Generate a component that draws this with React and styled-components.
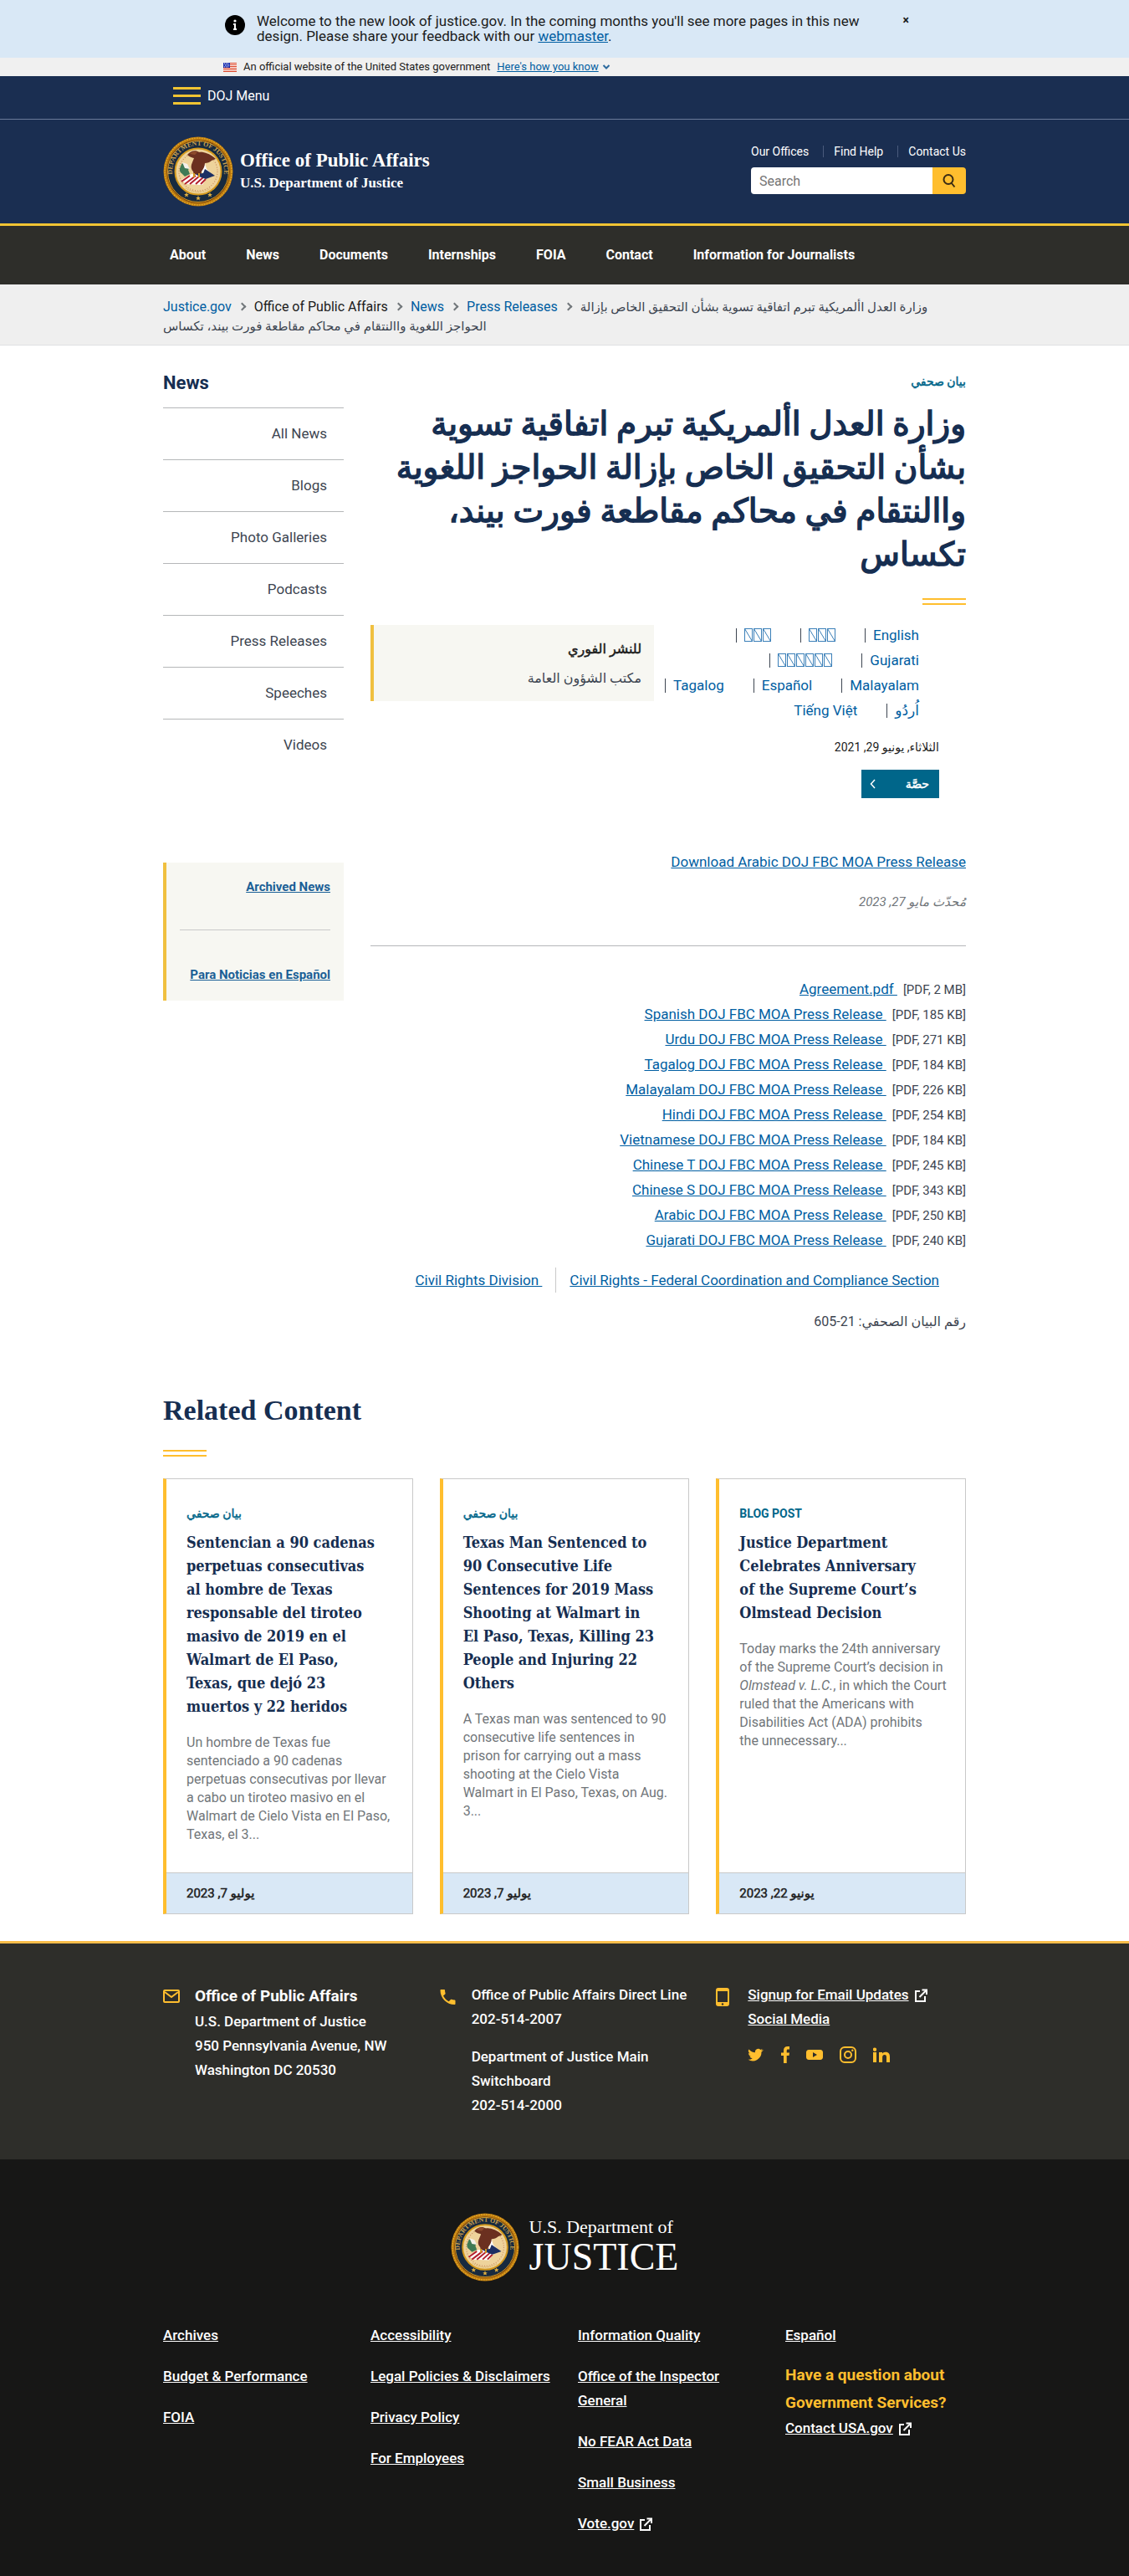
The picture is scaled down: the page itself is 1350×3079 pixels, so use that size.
import React from 'react';
import styled, { createGlobalStyle, css } from 'styled-components';

const sans = `"Roboto", "DejaVu Sans", sans-serif`;
const serif = `"Liberation Serif", "DejaVu Serif", serif`;
const cardSerif = `"DejaVu Serif Condensed", "Liberation Serif", serif`;
const gold = '#ffbe2e';
const navy = '#162e51';
const blue = '#005ea2';

/* Arabic emphasis: the regular face thickened by a stroke, so that its widths stay narrow. */
const arabicStrong = css`
  font-weight: 400;
  -webkit-text-stroke: ${(p) => p.$stroke || '0.5px'} currentColor;
`;

const GlobalStyle = createGlobalStyle`
  *, *::before, *::after { box-sizing: border-box; }
  body { margin: 0; background: #fff; color: #1b1b1b; font-family: ${sans}; font-size: 16px; line-height: 24px; }
  h1, h2, h3, p, ul, ol { margin: 0; padding: 0; }
  ul, ol { list-style: none; }
  a { color: ${blue}; }
  button, input { font-family: inherit; }
`;

const Container = styled.div`
  max-width: 992px;
  margin: 0 auto;
  padding: 0 16px;
`;

/* ---------- Site alert and government banner ---------- */
const Alert = styled.section`
  background: #d9e8f6;
`;
const AlertInner = styled.div`
  display: flex;
  align-items: flex-start;
  max-width: 824px;
  margin: 0 auto;
  padding: 16px 0 17px 5px;
`;
const AlertText = styled.p`
  width: 744px;
  padding-right: 16px;
  margin-left: 13px;
  font-size: 17px;
  line-height: 18px;
`;
const CloseButton = styled.button`
  margin-left: auto;
  padding: 0;
  border: 0;
  background: none;
  font-size: 14px;
  line-height: 16px;
  font-weight: 700;
  color: #1b1b1b;
`;
const GovBanner = styled.section`
  background: #f0f0f0;
`;
const GovInner = styled.div`
  display: flex;
  align-items: center;
  gap: 8px;
  max-width: 816px;
  margin: 0 auto;
  height: 22px;
  font-size: 13px;
  line-height: 22px;
`;
const GovToggle = styled.button`
  display: flex;
  align-items: center;
  gap: 4px;
  padding: 0;
  border: 0;
  background: none;
  color: ${blue};
  font-size: 13px;
  line-height: 16px;
  span { text-decoration: underline; }
`;

/* ---------- Header ---------- */
const Header = styled.header`
  background: #1a2e51;
  color: #fff;
`;
const MenuBar = styled.div`
  border-bottom: 1px solid #6a7a99;
`;
const MenuButton = styled.button`
  display: flex;
  align-items: center;
  gap: 8px;
  height: 51px;
  padding: 0 12px 4px;
  border: 0;
  background: none;
  color: #fff;
  font-size: 16px;
  line-height: 24px;
`;
const Brand = styled.div`
  display: flex;
  justify-content: space-between;
  padding: 20px 0;
`;
const BrandLink = styled.a`
  display: flex;
  align-items: center;
  gap: 8px;
  color: #fff;
  text-decoration: none;
  font-family: ${serif};
  font-weight: 700;
`;
const BrandName = styled.span`
  display: block;
  font-size: 23px;
  line-height: 28px;
`;
const BrandSub = styled.span`
  display: block;
  font-size: 17px;
  line-height: 26px;
`;
const Utility = styled.div`
  width: 257px;
  padding-top: 8px;
`;
const UtilityLinks = styled.ul`
  display: flex;
  justify-content: space-between;
  align-items: center;
  height: 20px;
  margin-bottom: 9px;
  li + li { border-left: 1px solid #4a5b7c; padding-left: 12px; }
  a { display: block; color: #fff; font-size: 14px; line-height: 14px; text-decoration: none; }
`;
const SearchForm = styled.form`
  display: flex;
  height: 32px;
`;
const SearchInput = styled.input`
  flex: 1;
  min-width: 0;
  border: 0;
  border-radius: 4px 0 0 4px;
  padding: 0 10px;
  font-size: 16px;
  background: #fff;
  &::placeholder { color: #757575; opacity: 1; }
`;
const SearchButton = styled.button`
  display: flex;
  align-items: center;
  justify-content: center;
  width: 40px;
  padding: 0;
  border: 0;
  border-radius: 0 4px 4px 0;
  background: ${gold};
`;
const Nav = styled.nav`
  background: #2e2e2a;
  border-top: 3px solid #f0c433;
`;
const NavList = styled.ul`
  display: flex;
  gap: 48px;
  padding: 0 8px;
  a { display: block; color: #fff; font-size: 16px; line-height: 70px; font-weight: 700; text-decoration: none; white-space: nowrap; }
`;
const Crumbs = styled.nav`
  background: #efefef;
  border-bottom: 1px solid #dfe1e2;
`;
const CrumbList = styled.ol`
  padding: 15px 0 11px;
  font-size: 16px;
  line-height: 23px;
  li { display: inline; }
  li + li::before {
    content: '';
    display: inline-block;
    width: 7px;
    height: 7px;
    margin: 0 11px 2px 9px;
    border: solid #71767a;
    border-width: 2px 2px 0 0;
    transform: rotate(45deg);
  }
  a { text-decoration: none; }
`;
const CrumbCurrent = styled.span`
  font-size: 15px;
  line-height: 20px;
  color: #3d4551;
`;

/* ---------- Main ---------- */
const Columns = styled.div`
  display: grid;
  grid-template-columns: 216px minmax(0, 1fr);
  gap: 32px;
  padding-top: 33px;
`;
const SideTitle = styled.h2`
  margin-bottom: 17px;
  color: ${navy};
  font-size: 22px;
  line-height: 24px;
`;
const SideNav = styled.ul`
  margin-bottom: 110px;
  a {
    display: block;
    padding: 0 20px;
    border-top: 1px solid #b5b7b9;
    color: #3d4551;
    font-size: 17px;
    line-height: 61px;
    text-align: right;
    text-decoration: none;
  }
`;
const SideBox = styled.aside`
  border-left: 4px solid #f0c040;
  background: #f7f7f2;
  padding: 18px 16px 20px;
  text-align: right;
  a { font-size: 15px; line-height: 22px; font-weight: 700; color: #1a5f96; display: block; }
`;
const SideRule = styled.hr`
  margin: 40px 0 42px;
  border: 0;
  border-top: 1px solid #c9c9c9;
`;

const Kicker = styled.p`
  color: #00668a;
  font-size: 14px;
  line-height: 20px;
  font-weight: 700;
  text-transform: uppercase;
  ${(p) => p.$arabic && arabicStrong}
`;
const Title = styled.h1`
  margin: 15px 0 26px;
  color: ${navy};
  font-size: 39px;
  line-height: 52px;
  ${arabicStrong}
`;
const DoubleRule = styled.div`
  width: 52px;
  height: 8px;
  border: solid ${gold};
  border-width: 2px 0;
`;
const Meta = styled.div`
  display: grid;
  grid-template-columns: minmax(0, 373fr) minmax(0, 339fr);
  align-items: start;
  padding-top: 24px;
`;
const MetaMain = styled.div`
  padding-right: 32px;
`;
const Languages = styled.ul`
  display: flex;
  flex-wrap: wrap;
  gap: 6px 35px;
  padding: 0 24px 0 13px;
  li { display: flex; align-items: center; height: 24px; }
  li:not(:last-child)::after {
    content: '';
    width: 1px;
    height: 17px;
    margin-right: 9px;
    background: #3d4551;
  }
`;
const LanguageLink = styled.a`
  display: flex;
  align-items: center;
  font-size: 17px;
  line-height: 24px;
  text-decoration: none;
`;
const PublishDate = styled.p`
  margin-top: 20px;
  font-size: 14px;
  line-height: 24px;
`;
const ShareButton = styled.button`
  display: flex;
  align-items: center;
  justify-content: space-between;
  width: 93px;
  height: 34px;
  margin-top: 15px;
  padding: 0 12px 0 10px;
  border: 0;
  background: #00668a;
  color: #fff;
  font-size: 14px;
  ${arabicStrong}
`;
const Notice = styled.div`
  border-left: 4px solid #f0c040;
  background: #f7f7f2;
  padding: 17px 15px 15px;
  font-size: 16px;
  line-height: 24px;
  color: #3d4551;
`;
const NoticeLead = styled.strong`
  display: block;
  margin-bottom: 11px;
  color: #1b1b1b;
  ${arabicStrong}
`;
const Body = styled.div`
  padding-top: 61px;
  font-size: 17px;
  line-height: 30px;
`;
const Updated = styled.p`
  margin: 18px 0 37px;
  color: #71767a;
  font-size: 15px;
  line-height: 30px;
  font-style: italic;
`;
const Rule = styled.hr`
  margin: 0;
  border: 0;
  border-top: 1px solid #b5b7b9;
`;
const Files = styled.ul`
  margin: 36px 0 18px;
  li { direction: ltr; text-align: right; }
  a { white-space: pre; line-height: 24px; }
  span { margin-left: 7px; font-size: 15px; line-height: 20px; color: #3d4551; }
`;
const Components = styled.ul`
  display: flex;
  justify-content: flex-end;
  direction: ltr;
  padding-right: 32px;
  margin-bottom: 20px;
  a { white-space: pre; }
  li + li { margin-left: 16px; padding-left: 16px; border-left: 1px solid #c9c9c9; }
`;
const ReleaseNumber = styled.p`
  font-size: 16px;
  color: #3d4551;
`;

/* ---------- Related content ---------- */
const Related = styled.section`
  padding: 70px 0 32px;
`;
const RelatedTitle = styled.h2`
  margin-bottom: 26px;
  color: ${navy};
  font-family: ${serif};
  font-size: 34px;
  line-height: 42px;
`;
const Cards = styled.div`
  display: grid;
  grid-template-columns: repeat(3, minmax(0, 1fr));
  gap: 32px;
  margin-top: 26px;
`;
const Card = styled.article`
  display: flex;
  flex-direction: column;
  border: 1px solid #c9c9c9;
  border-left: 4px solid ${gold};
`;
const CardBody = styled.div`
  flex: 1;
  padding: 31px 19px 34px 24px;
`;
const CardTitle = styled.h3`
  margin: 11px 0 18px;
  color: ${navy};
  font-family: ${cardSerif};
  font-size: 18px;
  line-height: 28px;
`;
const CardText = styled.p`
  color: #71767a;
  font-size: 16px;
  line-height: 22px;
`;
const CardDate = styled.p`
  padding: 12px 24px;
  border-top: 1px solid #c9c9c9;
  background: #d9e8f6;
  font-size: 15px;
  line-height: 24px;
  ${arabicStrong}
`;

/* ---------- Footers ---------- */
const OfficeFooter = styled.footer`
  background: #2e2e2a;
  border-top: 3px solid #f9bd4a;
  color: #fff;
`;
const OfficeGrid = styled(Container)`
  display: grid;
  grid-template-columns: repeat(3, minmax(0, 1fr));
  gap: 32px;
  padding-top: 47px;
  padding-bottom: 50px;
`;
const Contact = styled.div`
  display: grid;
  grid-template-columns: 22px minmax(0, 1fr);
  gap: 16px;
  font-size: 17px;
  line-height: 29px;
  font-weight: 500;
  svg { display: block; }
  a { color: #fff; }
`;
const ContactIcon = styled.span`
  padding-top: 6px;
`;
const ContactTitle = styled.h3`
  font-size: 19px;
  line-height: 32px;
`;
const Phones = styled.div`
  p + p { margin-top: 16px; }
`;
const ExternalLink = styled.a`
  display: flex;
  align-items: center;
  gap: 6px;
`;
const Social = styled.ul`
  display: flex;
  align-items: center;
  gap: 20px;
  margin-top: 18px;
  a { display: block; }
`;
const DojFooter = styled.footer`
  background: #171716;
  color: #fff;
  padding: 64px 0 48px;
`;
const FooterLogo = styled.div`
  display: flex;
  justify-content: center;
  align-items: center;
  gap: 12px;
  margin-bottom: 50px;
  font-family: ${serif};
`;
const LogoSmall = styled.span`
  display: block;
  font-size: 22px;
  line-height: 24px;
`;
const LogoBig = styled.span`
  display: block;
  font-size: 46px;
  line-height: 48px;
`;
const FooterGrid = styled(Container)`
  display: grid;
  grid-template-columns: repeat(4, minmax(0, 1fr));
  gap: 32px;
  font-size: 17px;
  line-height: 29px;
  font-weight: 500;
  li + li { margin-top: 20px; }
  a { color: #fff; }
`;
const Question = styled.h3`
  margin-top: -4px;
  color: ${gold};
  font-size: 19px;
  line-height: 33px;
`;

/* ---------- Drawings ---------- */
const Flag = () => (
  <svg width="16" height="11" viewBox="0 0 16 11" aria-hidden="true">
    <rect width="16" height="11" fill="#fff" />
    {[0, 2, 4, 6, 8, 10].map((y) => <rect key={y} y={y} width="16" height="1" fill="#db3e1f" />)}
    <rect width="8" height="6" fill="#1e33b1" />
    {[1, 3, 5].map((y) => [1, 3, 5].map((x) => <rect key={`${x}-${y}`} x={x + (y === 3 ? 1 : 0)} y={y - 0.5} width="1" height="1" fill="#fff" />))}
  </svg>
);

const FixedSvg = styled.svg`
  flex: none;
`;
const InfoIcon = () => (
  <FixedSvg width="26" height="26" viewBox="0 0 26 26" aria-hidden="true">
    <circle cx="13" cy="14" r="12" fill="#000" />
    <circle cx="13" cy="9" r="1.6" fill="#fff" />
    <path d="M11 12h3v6h1v2h-4v-2h1v-4h-1z" fill="#fff" />
  </FixedSvg>
);

const External = () => (
  <svg width="16" height="16" viewBox="0 0 16 16" fill="none" stroke="#fff" strokeWidth="2" aria-hidden="true">
    <path d="M7 3H2v12h11V9" />
    <path d="M6.500 10 14 2.500" />
    <path d="M9.500 1.500H15V7" />
  </svg>
);

const Seal = ({ size, id }) => (
  <svg width={size} height={size} viewBox="0 0 84 84" role="img" aria-label="Seal of the Department of Justice">
    <defs>
      <path id={id} d="M13.500 54 A31 31 0 1 1 70.500 54" />
    </defs>
    <circle cx="42" cy="42" r="41.500" fill="#b9770e" />
    <circle cx="42" cy="42" r="40" fill="none" stroke="#e0a526" strokeWidth="1.500" strokeDasharray="2 1" />
    <circle cx="42" cy="42" r="37.500" fill="#5a2a12" />
    <circle cx="42" cy="42" r="36.500" fill="#172a3f" stroke="#d49a1f" strokeWidth="1" />
    <text fill="#c9a050" fontFamily="Liberation Serif, serif" fontSize="8" fontWeight="700">
      <textPath href={`#${id}`} startOffset="50%" textAnchor="middle">DEPARTMENT OF JUSTICE</textPath>
    </text>
    <circle cx="42" cy="42" r="27.500" fill="#eed39b" stroke="#d49a1f" strokeWidth="2" />
    <circle cx="42" cy="42" r="23" fill="none" stroke="#c98b62" strokeWidth="1.200" strokeDasharray="1 2" />
    {[[28, 70], [42, 74], [56, 70]].map(([x, y]) => (
      <path key={x} d={`M${x} ${y - 3}l.9 2h2l-1.600 1.300.6 2.100-1.900-1.200-1.900 1.200.6-2.100-1.600-1.300h2z`} fill="#e0b040" />
    ))}
    <path d="M21 36c1-4 3-5 4-2 2-2 5-1 4 2 2 0 3 2 1 4l2 5-6 3-4-4c-2-1-3-5-1-8z" fill="#3f7a55" />
    <path d="M23 31l6 2 3 6-6-1z" fill="#f4f1ea" />
    <path d="M43 37l6-8 3 10 6 6-8 3z" fill="#fff" />
    <path d="M29 22c4-5 10-6 14-3 5-1 14 2 20 8l-5 2c-2 2-5 3-8 3 0 4-2 7-4 10l-2 8-6 1-2-9c-3-3-3-7-1-11l2-5c-3-1-5-1-8-4z" fill="#6b3020" />
    <path d="M32 21c2-3 6-4 9-2l-3 3z" fill="#8d4a2c" />
    <path d="M22 52l12-7 20 2-7 11-20-1z" fill="#fff" />
    <path d="M22 54l10-7M26 57l13-10M32 57l12-10M39 57l10-9M45 57l6-6" stroke="#b3202c" strokeWidth="2" />
    <path d="M39 45l9-1 2-5 12 8-11 4-8-3z" fill="#1c2f63" />
    <path d="M37 44v5M43 44v5" stroke="#d49a1f" strokeWidth="2" />
    <path d="M27 62c10 6 20 6 30 0" fill="none" stroke="#c9a05a" strokeWidth="1" strokeDasharray="1 1" />
  </svg>
);

const glyphBoxes = (count) => Array.from({ length: count }, (_, i) => i * 11);
/* Placeholder boxes for script names that the page font does not cover. */
const ScriptName = ({ count, label }) => (
  <FixedSvg width={count * 11 - 1} height="16" viewBox={`0 0 ${count * 11 - 1} 16`} fill="none" stroke="#3a7fb8" role="img" aria-label={label}>
    {glyphBoxes(count).map((x) => (
      <React.Fragment key={x}>
        <rect x={x + 0.5} y="0.5" width="9" height="15" />
        <path d={`M${x + 0.5} .5l9 15`} />
      </React.Fragment>
    ))}
  </FixedSvg>
);

const socials = [
  ['Twitter', 20, 'M18 4.500a7 7 0 0 1-2 .6 3.600 3.600 0 0 0 1.600-2 7 7 0 0 1-2.300.9A3.700 3.700 0 0 0 9 7.300 10.400 10.400 0 0 1 1.500 3.500a3.700 3.700 0 0 0 1.100 4.900 3.600 3.600 0 0 1-1.600-.5c0 1.800 1.200 3.300 2.900 3.700a3.600 3.600 0 0 1-1.600 0 3.700 3.700 0 0 0 3.400 2.600A7.400 7.400 0 0 1 .5 15.700a10.400 10.400 0 0 0 16-9.300A7 7 0 0 0 19 4.500z'],
  ['Facebook', 10, 'M3 20V11H0V7.500h3V5c0-3.200 1.800-5 4.700-5H10v3.400H8.300C7 3.400 6.700 4 6.700 5v2.500H10L9.500 11H6.700v9z'],
  ['YouTube', 20, 'M3.500 4h13A3 3 0 0 1 20 7v6a3 3 0 0 1-3.500 3h-13A3 3 0 0 1 0 13V7a3 3 0 0 1 3.500-3zM8 7v6l5-3z'],
  ['Instagram', 20, 'M6 0h8a6 6 0 0 1 6 6v8a6 6 0 0 1-6 6H6a6 6 0 0 1-6-6V6a6 6 0 0 1 6-6zm0 2a4 4 0 0 0-4 4v8a4 4 0 0 0 4 4h8a4 4 0 0 0 4-4V6a4 4 0 0 0-4-4zm4 3a5 5 0 1 1 0 10 5 5 0 0 1 0-10zm0 2a3 3 0 1 0 0 6 3 3 0 0 0 0-6zm5.300-3.500a1.200 1.200 0 1 1 0 2.400 1.200 1.200 0 0 1 0-2.400z'],
  ['LinkedIn', 20, 'M0 7h4v12H0zM2 1.500a2.200 2.200 0 1 1 0 4.400 2.200 2.200 0 0 1 0-4.400zM7 7h4v1.600C11.600 7.500 13 6.700 14.800 6.700 19 6.700 20 9.200 20 12.500V19h-4v-5.800c0-1.500-.2-3.200-2.200-3.200-2.100 0-2.700 1.500-2.700 3.200V19H7z'],
];

/* ---------- Content ---------- */
const headline = 'وزارة العدل األمريكية تبرم اتفاقية تسوية بشأن التحقيق الخاص بإزالة الحواجز اللغوية واالنتقام في محاكم مقاطعة فورت بيند، تكساس';

const navItems = ['About', 'News', 'Documents', 'Internships', 'FOIA', 'Contact', 'Information for Journalists'];
const sideItems = ['All News', 'Blogs', 'Photo Galleries', 'Podcasts', 'Press Releases', 'Speeches', 'Videos'];
const languages = [
  'English',
  <ScriptName key="a" count={3} label="简体字" />,
  <ScriptName key="b" count={3} label="繁體字" />,
  'Gujarati',
  <ScriptName key="c" count={6} label="हिन्दी" />,
  'Malayalam', 'Español', 'Tagalog', 'اُردُو', 'Tiếng Việt',
];
const files = [
  ['Agreement.pdf', '2 MB'],
  ['Spanish DOJ FBC MOA Press Release', '185 KB'],
  ['Urdu DOJ FBC MOA Press Release', '271 KB'],
  ['Tagalog DOJ FBC MOA Press Release', '184 KB'],
  ['Malayalam DOJ FBC MOA Press Release', '226 KB'],
  ['Hindi DOJ FBC MOA Press Release', '254 KB'],
  ['Vietnamese DOJ FBC MOA Press Release', '184 KB'],
  ['Chinese T DOJ FBC MOA Press Release', '245 KB'],
  ['Chinese S DOJ FBC MOA Press Release', '343 KB'],
  ['Arabic DOJ FBC MOA Press Release', '250 KB'],
  ['Gujarati DOJ FBC MOA Press Release', '240 KB'],
];
const cards = [
  {
    kicker: 'بيان صحفي',
    arabic: true,
    title: 'Sentencian a 90 cadenas perpetuas consecutivas al\u00a0hombre de Texas responsable del tiroteo masivo de 2019 en el Walmart de El Paso, Texas,\u00a0que dejó 23 muertos\u00a0y 22 heridos',
    text: 'Un hombre de Texas fue sentenciado a 90 cadenas perpetuas consecutivas por llevar a\u00a0cabo un tiroteo masivo en el Walmart de Cielo Vista en El Paso, Texas, el 3...',
    date: 'يوليو 7, 2023',
  },
  {
    kicker: 'بيان صحفي',
    arabic: true,
    title: 'Texas Man Sentenced to 90\u00a0Consecutive Life Sentences for 2019 Mass Shooting at Walmart in El\u00a0Paso, Texas, Killing 23 People and Injuring 22 Others',
    text: 'A Texas man was sentenced to 90 consecutive life sentences in prison for carrying out a mass shooting at the Cielo Vista Walmart\u00a0in El Paso, Texas, on Aug. 3...',
    date: 'يوليو 7, 2023',
  },
  {
    kicker: 'Blog Post',
    title: 'Justice Department Celebrates Anniversary of\u00a0the Supreme Court’s Olmstead Decision',
    text: <>Today marks the 24th anniversary of the Supreme Court’s decision in <em>Olmstead v. L.C.</em>, in which the Court ruled that the Americans with Disabilities Act (ADA) prohibits the{'\u00a0'}unnecessary...</>,
    date: 'يونيو 22, 2023',
  },
];
const footerColumns = [
  ['Archives', 'Budget & Performance', 'FOIA'],
  ['Accessibility', 'Legal Policies & Disclaimers', 'Privacy Policy', 'For Employees'],
  ['Information Quality', 'Office of the Inspector General', 'No FEAR Act Data', 'Small Business'],
];

const FooterColumn = ({ items, children }) => (
  <ul>
    {items.map((t) => <li key={t}><a href="#">{t}</a></li>)}
    {children}
  </ul>
);

export default function App() {
  return (
    <>
      <GlobalStyle />
      <Alert>
        <AlertInner>
          <InfoIcon />
          <AlertText>
            Welcome to the new look of justice.gov. In the coming months you'll see more pages in this new design. Please share your feedback with our <a href="#">webmaster</a>.
          </AlertText>
          <CloseButton type="button" aria-label="Close">×</CloseButton>
        </AlertInner>
      </Alert>
      <GovBanner>
        <GovInner>
          <Flag />
          <span>An official website of the United States government</span>
          <GovToggle type="button">
            <span>Here's how you know</span>
            <svg width="10" height="8" viewBox="0 0 10 8" fill="none" stroke="#2c6a9e" strokeWidth="2" aria-hidden="true"><path d="M1.500 2 5 5.500 8.500 2" /></svg>
          </GovToggle>
        </GovInner>
      </GovBanner>

      <Header>
        <MenuBar>
          <Container>
            <MenuButton type="button">
              <svg width="33" height="22" viewBox="0 0 33 22" fill="#f0c433" aria-hidden="true">
                <rect y="0" width="33" height="3" /><rect y="9" width="33" height="3" /><rect y="18" width="33" height="3" />
              </svg>
              DOJ Menu
            </MenuButton>
          </Container>
        </MenuBar>
        <Container>
          <Brand>
            <BrandLink href="#">
              <Seal size={84} id="seal-ring-top" />
              <span>
                <BrandName>Office of Public Affairs</BrandName>
                <BrandSub>U.S. Department of Justice</BrandSub>
              </span>
            </BrandLink>
            <Utility>
              <UtilityLinks>
                {['Our Offices', 'Find Help', 'Contact Us'].map((t) => <li key={t}><a href="#">{t}</a></li>)}
              </UtilityLinks>
              <SearchForm>
                <SearchInput type="search" placeholder="Search" aria-label="Search" />
                <SearchButton type="submit" aria-label="Submit search">
                  <svg width="18" height="18" viewBox="0 0 18 18" fill="none" stroke="#3a2b14" strokeWidth="2" aria-hidden="true">
                    <circle cx="8" cy="7.500" r="5.500" /><path d="M11.500 11.500 15.500 16.500" />
                  </svg>
                </SearchButton>
              </SearchForm>
            </Utility>
          </Brand>
        </Container>
      </Header>

      <Nav aria-label="Office of Public Affairs">
        <Container>
          <NavList>{navItems.map((t) => <li key={t}><a href="#">{t}</a></li>)}</NavList>
        </Container>
      </Nav>
      <Crumbs aria-label="Breadcrumbs">
        <Container>
          <CrumbList>
            <li><a href="#">Justice.gov</a></li>
            <li>Office of Public Affairs</li>
            <li><a href="#">News</a></li>
            <li><a href="#">Press Releases</a></li>
            <li><CrumbCurrent>{headline}</CrumbCurrent></li>
          </CrumbList>
        </Container>
      </Crumbs>

      <main>
        <Container>
          <Columns>
            <div>
              <SideTitle>News</SideTitle>
              <SideNav>{sideItems.map((t) => <li key={t}><a href="#">{t}</a></li>)}</SideNav>
              <SideBox>
                <a href="#">Archived News</a>
                <SideRule />
                <a href="#">Para Noticias en Español</a>
              </SideBox>
            </div>
            <article dir="rtl" lang="ar">
              <Kicker $arabic>بيان صحفي</Kicker>
              <Title $stroke="1.5px">{headline}</Title>
              <DoubleRule />
              <Meta>
                <MetaMain>
                  <Languages>
                    {languages.map((l, i) => <li key={i}><LanguageLink href="#">{l}</LanguageLink></li>)}
                  </Languages>
                  <PublishDate>الثلاثاء, يونيو 29, 2021</PublishDate>
                  <ShareButton type="button">
                    حصَّة
                    <svg width="7" height="12" viewBox="0 0 7 12" fill="none" stroke="#fff" strokeWidth="1.500" aria-hidden="true"><path d="M6 1 1.500 6 6 11" /></svg>
                  </ShareButton>
                </MetaMain>
                <Notice>
                  <NoticeLead>للنشر الفوري</NoticeLead>
                  مكتب الشؤون العامة
                </Notice>
              </Meta>
              <Body>
                <a href="#">Download Arabic DOJ FBC MOA Press Release</a>
                <Updated>مُحدّث مايو 27, 2023</Updated>
                <Rule />
                <Files>
                  {files.map(([name, size]) => (
                    <li key={name}><a href="#">{`${name} `}</a><span>[PDF, {size}]</span></li>
                  ))}
                </Files>
                <Components>
                  <li><a href="#">{'Civil Rights Division '}</a></li>
                  <li><a href="#">Civil Rights - Federal Coordination and Compliance Section</a></li>
                </Components>
                <ReleaseNumber>رقم البيان الصحفي: 21-605</ReleaseNumber>
              </Body>
            </article>
          </Columns>

          <Related>
            <RelatedTitle>Related Content</RelatedTitle>
            <DoubleRule />
            <Cards>
              {cards.map((c) => (
                <Card key={c.title}>
                  <CardBody>
                    <Kicker $arabic={c.arabic}>{c.kicker}</Kicker>
                    <CardTitle>{c.title}</CardTitle>
                    <CardText>{c.text}</CardText>
                  </CardBody>
                  <CardDate><span dir="rtl">{c.date}</span></CardDate>
                </Card>
              ))}
            </Cards>
          </Related>
        </Container>
      </main>

      <OfficeFooter>
        <OfficeGrid>
          <Contact>
            <ContactIcon>
              <svg width="20" height="20" viewBox="0 0 20 20" fill="none" stroke={gold} strokeWidth="2" aria-hidden="true"><rect x="1" y="3" width="18" height="14" rx="1" /><path d="M2 5l8 6 8-6" /></svg>
            </ContactIcon>
            <div>
              <ContactTitle>Office of Public Affairs</ContactTitle>
              <p>U.S. Department of Justice<br />950 Pennsylvania Avenue, NW<br />Washington DC 20530</p>
            </div>
          </Contact>
          <Contact>
            <ContactIcon>
              <svg width="20" height="20" viewBox="0 0 20 20" fill={gold} aria-hidden="true"><path d="M4 9.500c1.500 3 3.800 5.200 6.700 6.700l2.200-2.200c.3-.3.700-.4 1-.2 1.200.4 2.400.6 3.600.6.600 0 1 .4 1 1V19c0 .6-.4 1-1 1C8.100 20 .5 12.400.5 3c0-.6.4-1 1-1H5c.6 0 1 .4 1 1 0 1.200.2 2.400.6 3.600.1.300 0 .700-.3 1z" /></svg>
            </ContactIcon>
            <Phones>
              <p>Office of Public Affairs Direct Line<br />202-514-2007</p>
              <p>Department of Justice Main Switchboard<br />202-514-2000</p>
            </Phones>
          </Contact>
          <Contact>
            <ContactIcon>
              <svg width="16" height="22" viewBox="0 0 16 22" aria-hidden="true"><rect width="16" height="22" rx="3" fill={gold} /><rect x="2" y="4" width="12" height="13" fill="#2e2e2a" /><circle cx="8" cy="19.500" r="1.200" fill="#2e2e2a" /></svg>
            </ContactIcon>
            <div>
              <ExternalLink href="#">Signup for Email Updates<External /></ExternalLink>
              <a href="#">Social Media</a>
              <Social>
                {socials.map(([name, w, d]) => (
                  <li key={name}><a href="#" aria-label={name}><svg width={w} height="20" viewBox={`0 0 ${w} 20`} fill={gold} fillRule="evenodd"><path d={d} /></svg></a></li>
                ))}
              </Social>
            </div>
          </Contact>
        </OfficeGrid>
      </OfficeFooter>

      <DojFooter>
        <FooterLogo>
          <Seal size={82} id="seal-ring-bottom" />
          <span>
            <LogoSmall>U.S. Department of</LogoSmall>
            <LogoBig>JUSTICE</LogoBig>
          </span>
        </FooterLogo>
        <FooterGrid>
          <FooterColumn items={footerColumns[0]} />
          <FooterColumn items={footerColumns[1]} />
          <FooterColumn items={footerColumns[2]}>
            <li><ExternalLink href="#">Vote.gov<External /></ExternalLink></li>
          </FooterColumn>
          <FooterColumn items={['Español']}>
            <li>
              <Question>Have a question about Government Services?</Question>
              <ExternalLink href="#">Contact USA.gov<External /></ExternalLink>
            </li>
          </FooterColumn>
        </FooterGrid>
      </DojFooter>
    </>
  );
}
